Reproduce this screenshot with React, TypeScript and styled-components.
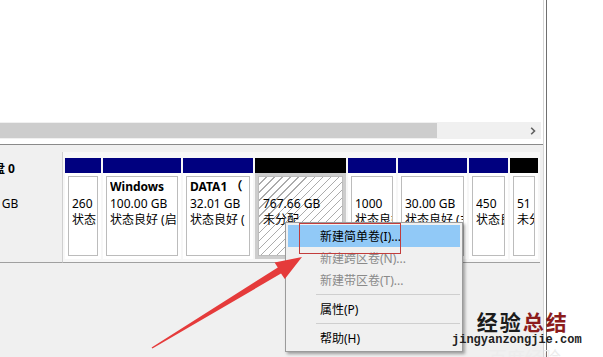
import React from 'react';
import styled, { createGlobalStyle } from 'styled-components';

const GlobalStyle = createGlobalStyle`
  html, body { margin: 0; padding: 0; background: #ffffff; }
  body { font-family: "Noto Sans", "Noto Sans CJK SC", sans-serif; color: #000; }
  #root { width: 603px; height: 357px; }
`;

const Screen = styled.div`
  position: relative;
  width: 603px;
  height: 357px;
  overflow: hidden;
  display: flex;
  background: #ffffff;
`;

const Window = styled.div`
  width: 547px;
  flex: none;
  display: flex;
  padding-right: 2px;
  border-right: 1px solid #6f6f6f;
  box-sizing: border-box;
  background: #ffffff;
`;

const Content = styled.div`
  flex: 1;
  display: flex;
  flex-direction: column;
  border-right: 1px solid #d6d6d6;
  background: #f0f0f0;
`;

const ListPane = styled.div`
  height: 145px;
  flex: none;
  display: flex;
  flex-direction: column;
  background: #ffffff;
  border-bottom: 1px solid #8a8a8a;
  box-sizing: border-box;
  padding-right: 2px;
`;

const ListBody = styled.div`
  height: 122px;
  flex: none;
  background: #ffffff;
`;

const HScroll = styled.div`
  height: 17px;
  flex: none;
  display: flex;
  box-sizing: border-box;
  padding: 1px 0;
  background: #f0f0f0;
`;

const ScrollThumb = styled.div`
  width: 437px;
  flex: none;
  background: #cdcdcd;
`;

const ScrollTrack = styled.div`
  flex: 1;
`;

const ScrollArrow = styled.div`
  width: 17px;
  flex: none;
  display: flex;
  align-items: center;
  justify-content: center;
`;

const DiskArea = styled.div`
  flex: 1;
  display: flex;
  flex-direction: column;
  padding-top: 7px;
  background: #f0f0f0;
`;

const DiskRow = styled.div`
  display: flex;
  height: 111px;
`;

const LabelPane = styled.div`
  width: 62px;
  flex: none;
  overflow: hidden;
  background: #f0f0f0;
  border-bottom: 1px solid #a0a0a0;
  box-sizing: border-box;
  padding-top: 8px;
  font-size: 12px;
`;

const LabelInner = styled.div`
  margin-left: -39px;
  white-space: nowrap;
`;

const LabelLine = styled.div<{ $bold?: boolean }>`
  display: flex;
  align-items: center;
  gap: 4px;
  height: 17.5px;
  line-height: 17.5px;
  font-weight: ${(p) => (p.$bold ? 700 : 400)};
`;

const PartitionsBox = styled.div`
  width: 478px;
  flex: none;
  display: flex;
  gap: 2px;
  padding: 6px 0 3px 2px;
  box-sizing: border-box;
  border-left: 1px solid #cfcfcf;
  border-bottom: 1px solid #a0a0a0;
  background: #f7f7f7;
`;

const Partition = styled.div`
  flex: none;
  display: flex;
  flex-direction: column;
  background: #ffffff;
`;

const PartHeader = styled.div<{ $free?: boolean }>`
  height: 15px;
  flex: none;
  background: ${(p) => (p.$free ? '#000000' : '#00007f')};
`;

const PartBody = styled.div<{ $selected?: boolean }>`
  flex: 1;
  display: flex;
  padding: 3px;
  min-height: 0;
  background: ${(p) => (p.$selected ? '#cdcdcd' : '#ffffff')};
`;

const PartFrame = styled.div<{ $selected?: boolean }>`
  flex: 1;
  min-width: 0;
  overflow: hidden;
  border: 1px solid ${(p) => (p.$selected ? '#bdbdbd' : '#bcbcbc')};
  padding: 2px 0 0 ${(p) => (p.$selected ? 4 : 3)}px;
  background: ${(p) =>
    p.$selected
      ? 'repeating-linear-gradient(135deg, #ffffff 0 4.7px, #acacac 4.7px 5.7px)'
      : '#ffffff'};
  font-size: 12px;
  line-height: 16.5px;
  white-space: nowrap;
`;

const PartLine = styled.div<{ $bold?: boolean }>`
  height: 16.5px;
  overflow: hidden;
  font-weight: ${(p) => (p.$bold ? 700 : 400)};
`;

const Menu = styled.div`
  position: absolute;
  left: 285px;
  top: 222px;
  width: 178px;
  box-sizing: border-box;
  padding: 2px;
  background: #f0f0f0;
  border: 1px solid #9b9b9b;
  box-shadow: 2px 2px 3px rgba(0, 0, 0, 0.35);
  font-size: 12px;
  z-index: 2;
`;

const MenuItem = styled.div<{ $active?: boolean; $disabled?: boolean }>`
  height: 22px;
  display: flex;
  align-items: center;
  padding-left: 32px;
  background: ${(p) => (p.$active ? '#91c9f7' : 'transparent')};
  color: ${(p) => (p.$disabled ? '#8a8a8a' : '#000000')};
  white-space: nowrap;
`;

const MenuSeparator = styled.div`
  height: 7px;
  display: flex;
  align-items: center;
  padding-left: 28px;
  &::after {
    content: '';
    flex: 1;
    height: 1px;
    background: #cfcfcf;
  }
`;

const Callout = styled.div`
  position: absolute;
  left: 299px;
  top: 223px;
  width: 102px;
  height: 31px;
  box-sizing: border-box;
  border: 1px solid #c23c3c;
  z-index: 3;
`;

const ArrowLayer = styled.svg`
  position: absolute;
  left: 0;
  top: 0;
  width: 603px;
  height: 357px;
  pointer-events: none;
  z-index: 4;
`;

const Watermark = styled.div`
  position: absolute;
  left: 452px;
  top: 309px;
  display: flex;
  flex-direction: column;
  align-items: center;
  z-index: 5;
`;

const WatermarkTitle = styled.div`
  font-family: "Noto Sans CJK SC", sans-serif;
  font-weight: 700;
  font-size: 21px;
  letter-spacing: 2px;
  line-height: 24px;
  color: #1c1c1c;
  padding-left: 12px;
`;

const WatermarkAccent = styled.span`
  color: #8c1c1c;
`;

const WatermarkUrl = styled.div`
  font-family: "Liberation Mono", monospace;
  font-weight: 700;
  font-size: 12px;
  line-height: 14px;
  color: #222222;
`;

const WatermarkFaint = styled.div`
  font-family: "Noto Sans CJK SC", sans-serif;
  font-size: 18px;
  line-height: 20px;
  color: #ececec;
  padding-left: 16px;
`;

type Part = {
  w: number;
  free?: boolean;
  selected?: boolean;
  lines: string[];
};

const parts: Part[] = [
  { w: 36, lines: ['', '260', '状态'] },
  { w: 78, lines: ['Windows', '100.00 GB', '状态良好 (启动, 页面文件, 故障转储, 主分区)'] },
  { w: 70, lines: ['DATA1 （', '32.01 GB', '状态良好 ('] },
  { w: 91, free: true, selected: true, lines: ['', '767.66 GB', '未分配'] },
  { w: 48, lines: ['', '1000', '状态良好 (恢复分区)'] },
  { w: 69, lines: ['', '30.00 GB', '状态良好 (主分区)'] },
  { w: 39, lines: ['', '450', '状态良好 (恢复分区)'] },
  { w: 28, free: true, lines: ['', '51', '未分配'] },
];

const DiskIcon = () => (
  <svg width="16" height="16" viewBox="0 0 16 16">
    <rect x="1" y="4" width="14" height="8" fill="#9a9a9a" stroke="#555" />
  </svg>
);

const Chevron = () => (
  <svg width="6" height="8" viewBox="0 0 6 8">
    <path d="M1.2 0.8 L4.5 4 L1.2 7.2" fill="none" stroke="#606060" strokeWidth="1.6" />
  </svg>
);

export default function App() {
  return (
    <Screen>
      <GlobalStyle />
      <Window>
        <Content>
          <ListPane>
            <ListBody />
            <HScroll>
              <ScrollThumb />
              <ScrollTrack />
              <ScrollArrow>
                <Chevron />
              </ScrollArrow>
            </HScroll>
          </ListPane>
          <DiskArea>
            <DiskRow>
              <LabelPane>
                <LabelInner>
                  <LabelLine $bold>
                    <DiskIcon />
                    磁盘 0
                  </LabelLine>
                  <LabelLine>基本</LabelLine>
                  <LabelLine>931.51 GB</LabelLine>
                  <LabelLine>联机</LabelLine>
                </LabelInner>
              </LabelPane>
              <PartitionsBox>
                {parts.map((p, i) => (
                  <Partition key={i} style={{ width: p.w }}>
                    <PartHeader $free={p.free} />
                    <PartBody $selected={p.selected}>
                      <PartFrame $selected={p.selected}>
                        {p.lines.map((l, j) => (
                          <PartLine key={j} $bold={j === 0}>
                            {l || '\u00a0'}
                          </PartLine>
                        ))}
                      </PartFrame>
                    </PartBody>
                  </Partition>
                ))}
              </PartitionsBox>
            </DiskRow>
          </DiskArea>
        </Content>
      </Window>

      <Menu>
        <MenuItem $active>新建简单卷(I)...</MenuItem>
        <MenuItem $disabled>新建跨区卷(N)...</MenuItem>
        <MenuItem $disabled>新建带区卷(T)...</MenuItem>
        <MenuSeparator />
        <MenuItem>属性(P)</MenuItem>
        <MenuSeparator />
        <MenuItem>帮助(H)</MenuItem>
      </Menu>
      <Callout />

      <ArrowLayer viewBox="0 0 603 357">
        <polygon
          points="152.4,348.6 281,273.6 284.8,279 302,257 274.6,262.4 277.8,267.4 151.6,347.4"
          fill="#e53b3b"
        />
      </ArrowLayer>

      <Watermark>
        <WatermarkTitle>
          经验<WatermarkAccent>总结</WatermarkAccent>
        </WatermarkTitle>
        <WatermarkUrl>jingyanzongjie.com</WatermarkUrl>
        <WatermarkFaint>百度经验</WatermarkFaint>
      </Watermark>
    </Screen>
  );
}
